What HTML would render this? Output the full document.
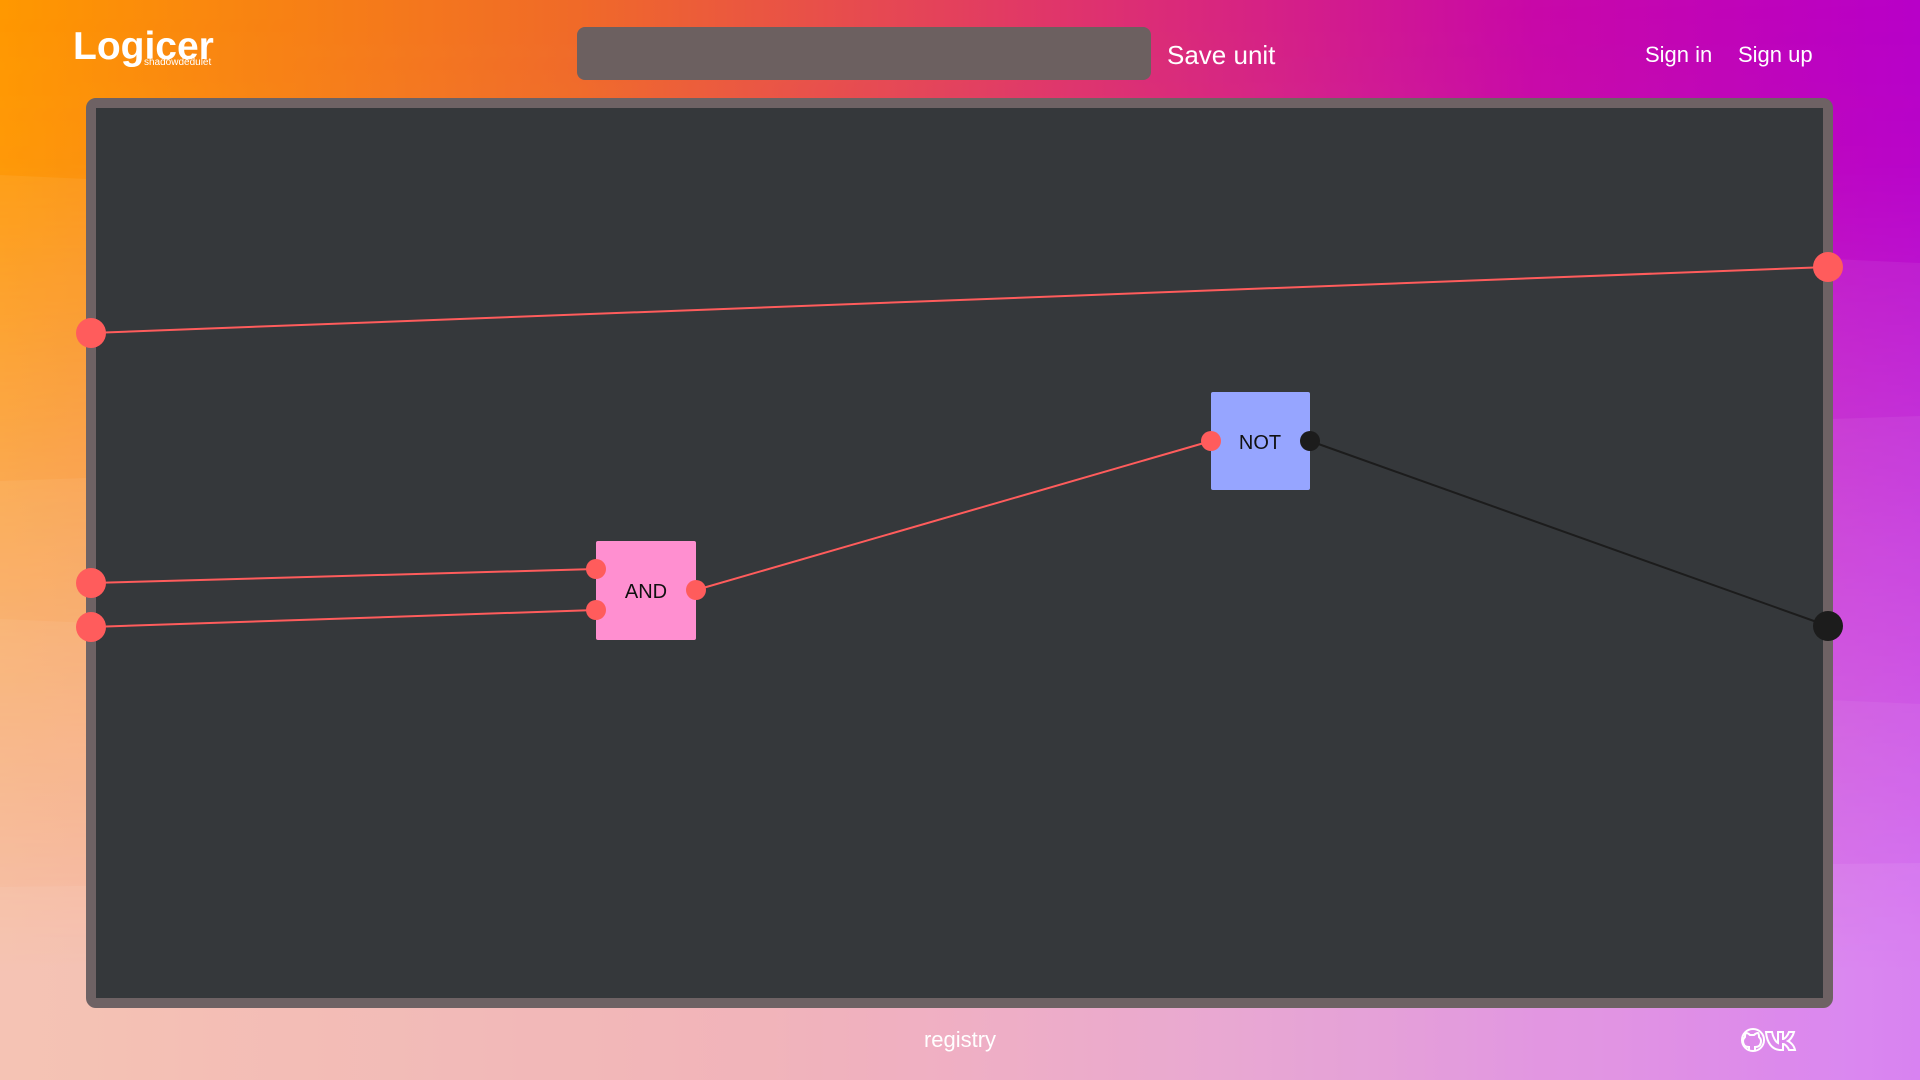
<!DOCTYPE html>
<html><head><meta charset="utf-8"><style>
html,body{margin:0;padding:0;width:1920px;height:1080px;overflow:hidden;font-family:"Liberation Sans",sans-serif;}
#bg{position:absolute;left:0;top:0}
.logo{position:absolute;left:73px;top:25px;color:#fff;font-size:39px;font-weight:bold;}
.sub{position:absolute;left:144px;top:57px;color:#fff;font-size:10px}
.search{position:absolute;left:577px;top:27px;width:574px;height:53px;background:#6c6060;border-radius:8px}
.save{position:absolute;left:1167px;top:40px;color:#fff;font-size:26px}
.nav{position:absolute;top:42px;color:#fff;font-size:22px}
.frame{position:absolute;left:86px;top:98px;width:1727px;height:890px;border:10px solid #6e6264;border-radius:10px;background:#35383b}
.reg{position:absolute;left:0;width:1920px;top:1027px;text-align:center;color:#fff;font-size:22px}
</style></head><body>
<svg id="bg" width="1920" height="1080">
<defs>
<linearGradient id="g" x1="0" y1="0" x2="1" y2="0">
<stop offset="0" stop-color="#ff9800"/><stop offset="0.3" stop-color="#f06a28"/><stop offset="0.55" stop-color="#e0356a"/><stop offset="0.8" stop-color="#c808a8"/><stop offset="1" stop-color="#b800c8"/>
</linearGradient>
<linearGradient id="b" x1="0" y1="0" x2="1" y2="0">
<stop offset="0" stop-color="#f5b4a0"/><stop offset="0.4" stop-color="#f0a0a8"/><stop offset="0.65" stop-color="#e490c8"/><stop offset="1" stop-color="#d060f0"/>
</linearGradient>
<linearGradient id="mg" x1="0" y1="0" x2="0" y2="1">
<stop offset="0" stop-color="#fff" stop-opacity="0"/><stop offset="0.15" stop-color="#fff" stop-opacity="0.05"/><stop offset="0.9" stop-color="#fff" stop-opacity="1"/>
</linearGradient>
<mask id="m"><rect width="1920" height="1080" fill="url(#mg)"/></mask>
</defs>
<rect width="1920" height="1080" fill="url(#g)"/>
<rect width="1920" height="1080" fill="url(#b)" mask="url(#m)"/>
<polygon points="0,175 1920,263 1920,1080 0,1080" fill="#fff" fill-opacity="0.06"/>
<polygon points="0,481 1920,416 1920,1080 0,1080" fill="#fff" fill-opacity="0.06"/>
<polygon points="0,619 1920,704 1920,1080 0,1080" fill="#fff" fill-opacity="0.06"/>
<polygon points="0,887 1920,863 1920,1080 0,1080" fill="#fff" fill-opacity="0.07"/>
</svg>
<div class="logo">Logicer</div>
<div class="sub">shadowdedulet</div>
<div class="search"></div>
<div class="save">Save unit</div>
<div class="nav" style="left:1645px">Sign in</div>
<div class="nav" style="left:1738px">Sign up</div>
<div class="frame"></div>
<svg style="position:absolute;left:0;top:0" width="1920" height="1080">
<g stroke="#ff5c5c" stroke-width="2">
<line x1="91" y1="333" x2="1828" y2="267"/>
<line x1="91" y1="583" x2="596" y2="569"/>
<line x1="91" y1="627" x2="596" y2="610"/>
<line x1="696" y1="590" x2="1211" y2="441"/>
</g>
<line x1="1310" y1="441" x2="1828" y2="626" stroke="#1c1c1c" stroke-width="2"/>
<rect x="596" y="541" width="100" height="99" fill="#ff8fd0" rx="2"/>
<text x="646" y="598" text-anchor="middle" font-family="Liberation Sans" font-size="20" fill="#111">AND</text>
<rect x="1211" y="392" width="99" height="98" fill="#96a5ff" rx="2"/>
<text x="1260" y="449" text-anchor="middle" font-family="Liberation Sans" font-size="20" fill="#111">NOT</text>
<g fill="#ff5c5c">
<circle cx="91" cy="333" r="15"/><circle cx="91" cy="583" r="15"/><circle cx="91" cy="627" r="15"/>
<circle cx="1828" cy="267" r="15"/>
<circle cx="596" cy="569" r="10"/><circle cx="596" cy="610" r="10"/><circle cx="696" cy="590" r="10"/>
<circle cx="1211" cy="441" r="10"/>
</g>
<circle cx="1310" cy="441" r="10" fill="#1c1c1c"/>
<circle cx="1828" cy="626" r="15" fill="#1c1c1c"/>
<g fill="none" stroke="#fff" stroke-width="2">
<circle cx="1753" cy="1040" r="11"/>
<path d="M1749,1051 v-4 c-4,0 -6,-2 -6,-6 c0,-2 1,-3 2,-4 c0,-2 0,-3 1,-4 c1,0 3,1 4,2 h4 c1,-1 3,-2 4,-2 c1,1 1,2 1,4 c1,1 2,2 2,4 c0,4 -2,6 -6,6 v4"/>
<path d="M1766,1032 h6 c1,6 4,10 6,11 v-11 h5 v7 c2,0 5,-4 6,-7 h5 c-1,4 -4,8 -6,9 c2,1 6,4 7,9 h-6 c-1,-3 -4,-6 -6,-6 v6 h-2 c-9,0 -14,-7 -15,-18z"/>
</g>
</svg>
<div class="reg">registry</div>
</body></html>
